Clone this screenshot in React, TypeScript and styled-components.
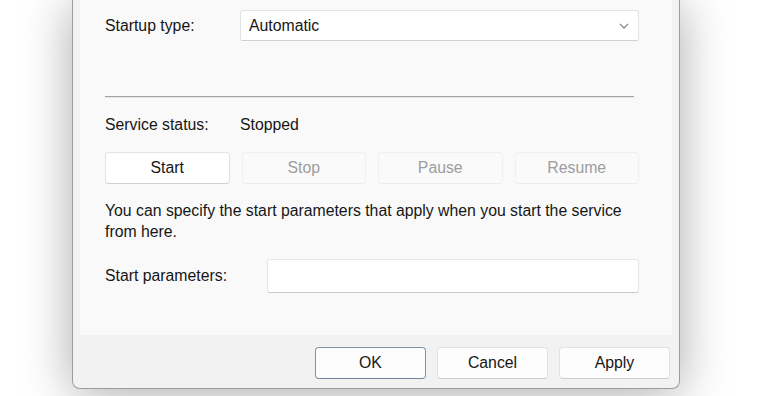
import React, { FC } from "react";
import styled, { createGlobalStyle } from "styled-components";

const GlobalStyle = createGlobalStyle`
  html, body {
    margin: 0;
    padding: 0;
    background: #ffffff;
    overflow: hidden;
  }
  body {
    font-family: "Liberation Sans", Arial, sans-serif;
    font-size: 15.8px;
    color: #161616;
  }
`;

const Page = styled.div`
  width: 780px;
  height: 396px;
  background: #ffffff;
  padding-left: 72px;
  box-sizing: border-box;
`;

const Window = styled.div`
  width: 608px;
  height: 389px;
  box-sizing: border-box;
  border: 1px solid #9c9c9c;
  border-top: none;
  border-radius: 0 0 8px 8px;
  background: #f2f2f2;
  box-shadow: 0 4px 50px rgba(0, 0, 0, 0.34);
  display: flex;
  flex-direction: column;
  padding: 0 7px;
`;

const Panel = styled.div`
  height: 335px;
  width: 592px;
  box-sizing: border-box;
  background: #f9f9f9;
  padding: 10px 33px 0 25px;
  display: flex;
  flex-direction: column;
`;

const Row = styled.div<{ $top?: number; $labelWidth: number }>`
  display: grid;
  grid-template-columns: ${(p) => p.$labelWidth}px 1fr;
  align-items: center;
  margin-top: ${(p) => p.$top ?? 0}px;
`;

const Label = styled.span`
  line-height: 20px;
`;

const Combo = styled.div`
  height: 31px;
  box-sizing: border-box;
  background: #ffffff;
  border: 1px solid #e2e2e2;
  border-bottom-color: #cfcfcf;
  border-radius: 3px;
  display: flex;
  align-items: center;
  justify-content: space-between;
  padding: 0 9px 0 8px;
`;

const Separator = styled.div`
  margin-top: 55px;
  margin-right: 5px;
  height: 1px;
  background: #a3a3a3;
  border-bottom: 1px solid #e6e6e6;
`;

const ButtonGrid = styled.div`
  display: grid;
  grid-template-columns: repeat(4, 1fr);
  gap: 12px;
  margin-top: 17px;
`;

const ActionButton = styled.button<{ $disabled?: boolean }>`
  height: 32px;
  font: inherit;
  color: ${(p) => (p.$disabled ? "#9d9d9d" : "#161616")};
  background: ${(p) => (p.$disabled ? "#fafafa" : "#ffffff")};
  border: 1px solid ${(p) => (p.$disabled ? "#f0f0f0" : "#e3e3e3")};
  border-bottom-color: ${(p) => (p.$disabled ? "#ececec" : "#d0d0d0")};
  border-radius: 4px;
  padding: 0;
`;

const Paragraph = styled.p`
  margin: 16px 0 0 0;
  line-height: 21px;
`;

const TextInput = styled.div`
  height: 34px;
  box-sizing: border-box;
  background: #ffffff;
  border: 1px solid #e6e6e6;
  border-bottom-color: #c8c8c8;
  border-radius: 3px;
`;

const Footer = styled.div`
  display: flex;
  justify-content: flex-end;
  gap: 11px;
  padding: 12px 2px 0 0;
`;

const DialogButton = styled.button<{ $primary?: boolean }>`
  width: 111px;
  height: 32px;
  font: inherit;
  color: #161616;
  background: #fdfdfd;
  border: 1px solid ${(p) => (p.$primary ? "#7f93a8" : "#e2e2e2")};
  border-bottom-color: ${(p) => (p.$primary ? "#6f839a" : "#cdcdcd")};
  border-radius: 4px;
  padding: 0;
`;

const Chevron: FC = () => (
  <svg width="10" height="6" viewBox="0 0 10 6">
    <path d="M1 1 L5 5 L9 1" fill="none" stroke="#8a8a8a" strokeWidth="1.3" />
  </svg>
);

const App: FC = () => {
  const actions = [
    { name: "Start", disabled: false },
    { name: "Stop", disabled: true },
    { name: "Pause", disabled: true },
    { name: "Resume", disabled: true },
  ];
  return (
    <Page>
      <GlobalStyle />
      <Window>
        <Panel>
          <Row $labelWidth={135}>
            <Label>Startup type:</Label>
            <Combo>
              <span>Automatic</span>
              <Chevron />
            </Combo>
          </Row>
          <Separator />
          <Row $top={17} $labelWidth={135}>
            <Label>Service status:</Label>
            <Label>Stopped</Label>
          </Row>
          <ButtonGrid>
            {actions.map((a) => (
              <ActionButton key={a.name} $disabled={a.disabled}>
                {a.name}
              </ActionButton>
            ))}
          </ButtonGrid>
          <Paragraph>
            You can specify the start parameters that apply when you start the service from here.
          </Paragraph>
          <Row $top={17} $labelWidth={162}>
            <Label>Start parameters:</Label>
            <TextInput />
          </Row>
        </Panel>
        <Footer>
          <DialogButton $primary>OK</DialogButton>
          <DialogButton>Cancel</DialogButton>
          <DialogButton>Apply</DialogButton>
        </Footer>
      </Window>
    </Page>
  );
};

export default App;
